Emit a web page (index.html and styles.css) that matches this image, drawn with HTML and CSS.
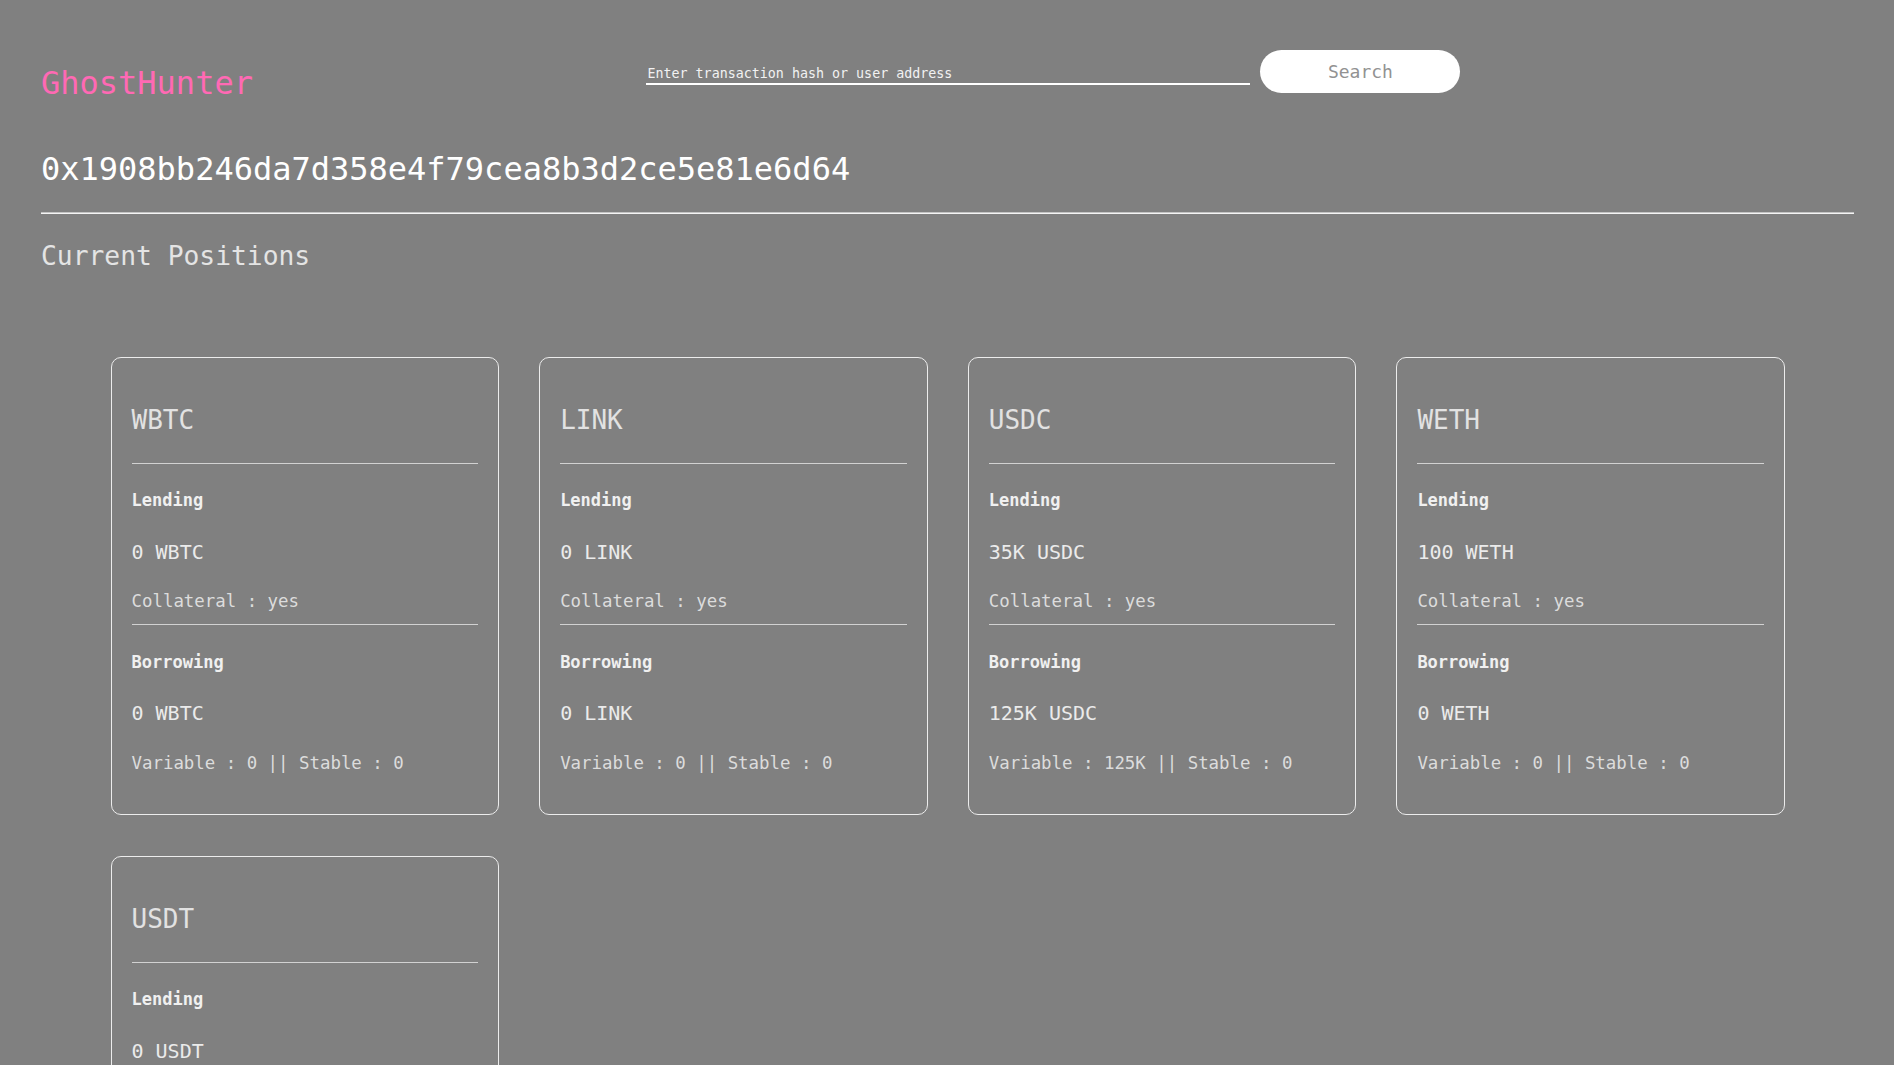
FILE: index.html
```html
<!DOCTYPE html>
<html lang="en">
<head>
<meta charset="utf-8">
<title>GhostHunter</title>
<link rel="stylesheet" href="styles.css">
</head>
<body>
<header class="topbar">
  <div class="logo">GhostHunter</div>
  <div class="search-area">
    <form class="search-form">
      <input class="search-input" type="text" placeholder="Enter transaction hash or user address">
      <button class="search-btn" type="button">Search</button>
    </form>
  </div>
</header>
<h1 class="address">0x1908bb246da7d358e4f79cea8b3d2ce5e81e6d64</h1>
<hr class="divider">
<h2 class="section-title">Current Positions</h2>
<div class="cards">
  <div class="card">
    <h3 class="card-title">WBTC</h3>
    <hr class="card-rule">
    <p class="label label-first">Lending</p>
    <p class="amount">0 WBTC</p>
    <p class="detail">Collateral : yes</p>
    <hr class="card-rule card-rule-mid">
    <p class="label">Borrowing</p>
    <p class="amount">0 WBTC</p>
    <p class="detail">Variable : 0 || Stable : 0</p>
  </div>
  <div class="card">
    <h3 class="card-title">LINK</h3>
    <hr class="card-rule">
    <p class="label label-first">Lending</p>
    <p class="amount">0 LINK</p>
    <p class="detail">Collateral : yes</p>
    <hr class="card-rule card-rule-mid">
    <p class="label">Borrowing</p>
    <p class="amount">0 LINK</p>
    <p class="detail">Variable : 0 || Stable : 0</p>
  </div>
  <div class="card">
    <h3 class="card-title">USDC</h3>
    <hr class="card-rule">
    <p class="label label-first">Lending</p>
    <p class="amount">35K USDC</p>
    <p class="detail">Collateral : yes</p>
    <hr class="card-rule card-rule-mid">
    <p class="label">Borrowing</p>
    <p class="amount">125K USDC</p>
    <p class="detail">Variable : 125K || Stable : 0</p>
  </div>
  <div class="card">
    <h3 class="card-title">WETH</h3>
    <hr class="card-rule">
    <p class="label label-first">Lending</p>
    <p class="amount">100 WETH</p>
    <p class="detail">Collateral : yes</p>
    <hr class="card-rule card-rule-mid">
    <p class="label">Borrowing</p>
    <p class="amount">0 WETH</p>
    <p class="detail">Variable : 0 || Stable : 0</p>
  </div>
  <div class="card">
    <h3 class="card-title">USDT</h3>
    <hr class="card-rule">
    <p class="label label-first">Lending</p>
    <p class="amount">0 USDT</p>
    <p class="detail">Collateral : yes</p>
    <hr class="card-rule card-rule-mid">
    <p class="label">Borrowing</p>
    <p class="amount">0 USDT</p>
    <p class="detail">Variable : 0 || Stable : 0</p>
  </div>
</div>
</body>
</html>
```

FILE: styles.css
```css
html, body {
  background: #808080;
}

body {
  margin: 0;
  padding: 0 40px 40px 41px;
  font-family: "DejaVu Sans Mono", "Liberation Mono", monospace;
  color: #ffffff;
}

.topbar {
  display: flex;
  align-items: flex-start;
}

.logo {
  margin-top: 64px;
  font-size: 32px;
  line-height: 38px;
  color: #ff69b4;
}

.search-area {
  flex: 1;
  display: flex;
  justify-content: center;
  margin-top: 50px;
}

.search-form {
  display: flex;
  align-items: flex-start;
  margin: 0;
}

.search-input {
  box-sizing: border-box;
  width: 604px;
  height: 21px;
  margin-top: 14px;
  padding: 0 1px;
  border: 0;
  border-bottom: 2px solid #ffffff;
  background: transparent;
  font-family: "DejaVu Sans Mono", "Liberation Mono", monospace;
  font-size: 13.33px;
  color: #f2f2f2;
  outline: none;
}

.search-input::placeholder {
  color: #f2f2f2;
  opacity: 1;
}

.search-btn {
  width: 200px;
  height: 43px;
  margin-left: 10px;
  border: 0;
  border-radius: 22px;
  background: #ffffff;
  color: #929292;
  font-family: "DejaVu Sans Mono", "Liberation Mono", monospace;
  font-size: 18px;
}

.address {
  margin: 48px 0 0;
  font-size: 32px;
  line-height: 38px;
  font-weight: normal;
  color: #ffffff;
}

.divider {
  margin: 24px 0 0;
  height: 0;
  border: 0;
  border-top: 1px solid #c4c4c4;
  border-bottom: 1px solid #f4f4f4;
}

.section-title {
  margin: 26px 0 0;
  font-size: 26.3px;
  line-height: 32px;
  font-weight: normal;
  color: #e4e4e4;
}

.cards {
  display: grid;
  grid-template-columns: repeat(4, 1fr);
  column-gap: 40px;
  row-gap: 41px;
  margin: 85px 69px 0 69.5px;
}

.card {
  box-sizing: border-box;
  border: 1px solid #ececec;
  border-radius: 10px;
  padding: 0 20px 41.5px;
}

.card-title {
  margin: 46px 0 0;
  font-size: 26px;
  line-height: 32px;
  font-weight: normal;
  color: #e2e2e2;
}

.card-rule {
  margin: 27px 0 0;
  height: 0;
  border: 0;
  border-top: 1px solid #d2d2d2;
}

.card-rule-mid {
  margin-top: 13px;
}

.label {
  margin: 26.6px 0 0;
  font-size: 17px;
  line-height: 20px;
  font-weight: bold;
  color: #f0f0f0;
}

.label-first {
  margin-top: 26px;
}

.amount {
  margin: 29.5px 0 0;
  font-size: 20px;
  line-height: 24px;
  color: #ebebeb;
}

.detail {
  margin: 27.5px 0 0;
  font-size: 17.4px;
  line-height: 20px;
  color: #dcdcdc;
}
```
